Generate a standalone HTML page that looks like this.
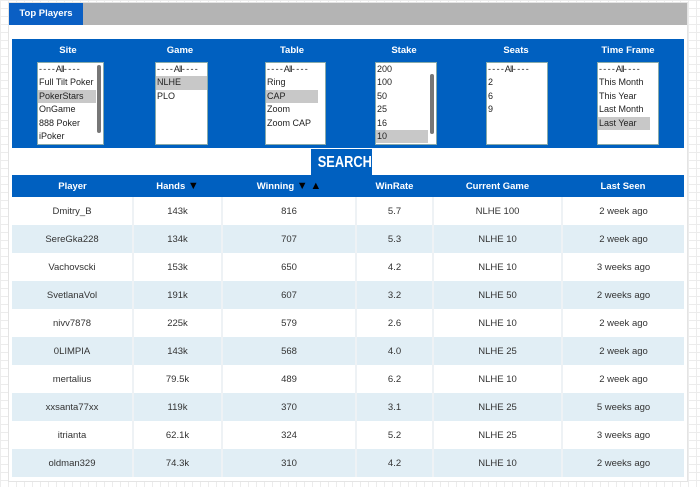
<!DOCTYPE html>
<html><head><style>
*{margin:0;padding:0;box-sizing:border-box}
body{width:700px;height:487px;overflow:hidden;font-family:"Liberation Sans",sans-serif;background-color:#fff;background-image:linear-gradient(#ececec 1px,transparent 1px),linear-gradient(90deg,#ececec 1px,transparent 1px);background-size:8px 8px;position:relative}
#panel{position:absolute;left:8px;top:2px;width:680px;height:480px;background:#fff;border:1px solid #e4e4e4}
#tabbar{position:absolute;left:9px;top:3px;width:678px;height:22px;background:#b4b4b4}
#tab{position:absolute;left:9px;top:3px;width:74px;height:22px;background:#0a5fc4;color:#fff;font-size:9.5px;font-weight:bold;line-height:22px;text-align:center}
#filters{position:absolute;left:12px;top:39px;width:672px;height:109px;background:#0060c0}
.col{position:absolute;top:0;width:112px;text-align:center;color:#fff;font-size:9.5px;font-weight:bold}
.col .h{position:absolute;top:6px;width:112px;text-align:center}
.sel{position:absolute;top:23px;height:83px;background:#fff;border:1px solid #8aa;text-align:left;color:#222;font-weight:normal;font-size:9px;overflow:hidden;padding-top:0}
.sel div{height:13.4px;line-height:13.4px;padding-left:1px;white-space:nowrap}
.sel .s{background:#c8c8c8}
.d{letter-spacing:-0.6px}
.sb{position:absolute;right:2px;width:4px;background:#777;border-radius:2px}
#search{position:absolute;left:311px;top:149px;width:61px;height:27px;background:#0060c0;color:#fff;font-weight:bold;font-size:16px;line-height:27px;text-align:center}
table{position:absolute;left:12px;top:175px;width:672px;border-collapse:collapse;font-size:9.5px;color:#333}
th{background:#0060c0;color:#fff;height:22px;font-weight:bold;font-size:9.5px}
td{height:28px;text-align:center;border-right:2px solid #eef2f5}
td:last-child{border-right:none}
tr.a td{background:#e1eef5}
tr.b td{background:#fff}
.tri{font-size:11px;color:#000}
</style></head><body>
<div id="panel"></div>
<div id="tabbar"></div>
<div id="tab">Top Players</div>
<div id="filters">
 <div class="col" style="left:0"><div class="h">Site</div>
  <div class="sel" style="left:25px;width:67px"><div class="d">- - - - All- - - -</div><div>Full Tilt Poker</div><div class="s" style="width:58px">PokerStars</div><div>OnGame</div><div>888 Poker</div><div>iPoker</div><div class="sb" style="top:2px;height:68px"></div></div></div>
 <div class="col" style="left:112px"><div class="h">Game</div>
  <div class="sel" style="left:31px;width:53px"><div class="d">- - - - All- - - -</div><div class="s" style="width:51px">NLHE</div><div>PLO</div></div></div>
 <div class="col" style="left:224px"><div class="h">Table</div>
  <div class="sel" style="left:29px;width:61px"><div class="d">- - - - All- - - -</div><div>Ring</div><div class="s" style="width:52px">CAP</div><div>Zoom</div><div>Zoom CAP</div></div></div>
 <div class="col" style="left:336px"><div class="h">Stake</div>
  <div class="sel" style="left:27px;width:62px"><div>200</div><div>100</div><div>50</div><div>25</div><div>16</div><div class="s" style="width:52px">10</div><div class="sb" style="top:11px;height:60px"></div></div></div>
 <div class="col" style="left:448px"><div class="h">Seats</div>
  <div class="sel" style="left:26px;width:62px"><div class="d">- - - - All- - - -</div><div>2</div><div>6</div><div>9</div></div></div>
 <div class="col" style="left:560px"><div class="h">Time Frame</div>
  <div class="sel" style="left:25px;width:62px"><div class="d">- - - - All- - - -</div><div>This Month</div><div>This Year</div><div>Last Month</div><div class="s" style="width:52px">Last Year</div></div></div>
</div>
<div id="search"><span style="display:inline-block;transform:scaleX(0.8)">SEARCH</span></div>
<table>
<tr><th style="width:121px">Player</th><th style="width:89px">Hands <span class="tri">▼</span></th><th style="width:134px">Winning <span class="tri">▼</span> <span class="tri">▲</span></th><th style="width:77px">WinRate</th><th style="width:129px">Current Game</th><th>Last Seen</th></tr>
<tr class="b"><td>Dmitry_B</td><td>143k</td><td>816</td><td>5.7</td><td>NLHE 100</td><td>2 week ago</td></tr>
<tr class="a"><td>SereGka228</td><td>134k</td><td>707</td><td>5.3</td><td>NLHE 10</td><td>2 week ago</td></tr>
<tr class="b"><td>Vachovscki</td><td>153k</td><td>650</td><td>4.2</td><td>NLHE 10</td><td>3 weeks ago</td></tr>
<tr class="a"><td>SvetlanaVol</td><td>191k</td><td>607</td><td>3.2</td><td>NLHE 50</td><td>2 weeks ago</td></tr>
<tr class="b"><td>nivv7878</td><td>225k</td><td>579</td><td>2.6</td><td>NLHE 10</td><td>2 week ago</td></tr>
<tr class="a"><td>0LIMPIA</td><td>143k</td><td>568</td><td>4.0</td><td>NLHE 25</td><td>2 week ago</td></tr>
<tr class="b"><td>mertalius</td><td>79.5k</td><td>489</td><td>6.2</td><td>NLHE 10</td><td>2 week ago</td></tr>
<tr class="a"><td>xxsanta77xx</td><td>119k</td><td>370</td><td>3.1</td><td>NLHE 25</td><td>5 weeks ago</td></tr>
<tr class="b"><td>itrianta</td><td>62.1k</td><td>324</td><td>5.2</td><td>NLHE 25</td><td>3 weeks ago</td></tr>
<tr class="a"><td>oldman329</td><td>74.3k</td><td>310</td><td>4.2</td><td>NLHE 10</td><td>2 weeks ago</td></tr>
</table>
</body></html>
